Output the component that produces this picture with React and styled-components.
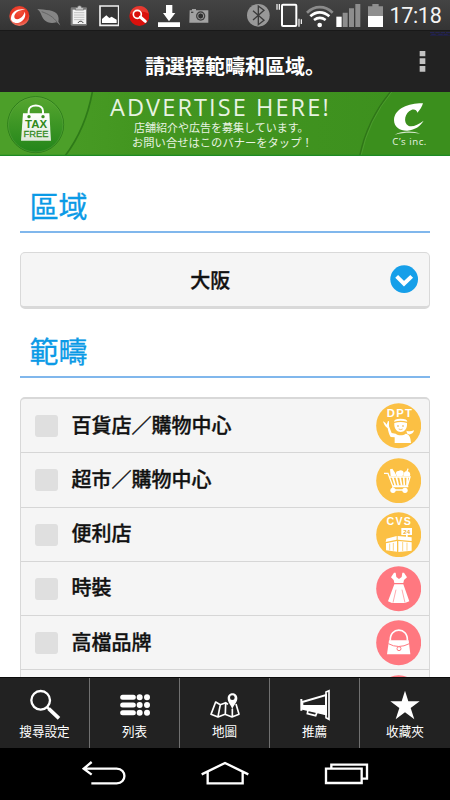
import React from 'react';
import styled, { createGlobalStyle } from 'styled-components';

const GlobalStyle = createGlobalStyle`
  * {
    box-sizing: border-box;
  }

  body {
    margin: 0;
    background: #fff;
    font-family: "Noto Sans CJK JP", "Noto Sans CJK TC", sans-serif;
  }
`;

const Screen = styled.div`
  display: flex;
  flex-direction: column;
  width: 450px;
  height: 800px;
  overflow: hidden;
  background: #fff;
`;

// Drawings are in thirds of a pixel, so the box is three times the drawn size.
const Svg = styled.svg.attrs(({ $box }) => ({
  viewBox: $box.join(' '),
  width: $box[2] / 3,
  height: $box[3] / 3,
  'aria-hidden': true,
}))`
  display: block;
  flex: none;
  margin-left: ${({ $before }) => $before || 0}px;
`;

const StatusBar = styled.header`
  display: flex;
  flex: none;
  height: 31px;
  background: linear-gradient(#444, #343434);
  border-bottom: 1px solid #191919;
`;

const Clock = styled.time`
  margin-left: 6.5px;
  color: #f4f4f4;
  font: 400 21.5px/32px Roboto, sans-serif;
  letter-spacing: -0.3px;
`;

const TitleBar = styled.div`
  display: grid;
  grid-template-columns: 145px 1fr 36px;
  flex: none;
  height: 61px;
  background: #222;
`;

const Title = styled.h1`
  grid-column: 2;
  margin: 0;
  color: #fff;
  font-size: 20px;
  font-weight: 700;
  line-height: 69px;
  white-space: nowrap;
`;

const Banner = styled.a`
  position: relative;
  display: grid;
  grid-template-columns: 110px 1fr 92px;
  flex: none;
  height: 64px;
  overflow: hidden;
  background: #41921f;
`;

const BannerArt = styled(Svg)`
  position: absolute;
  top: 0;
  left: 0;
`;

const BannerText = styled.div`
  position: relative;
  grid-column: 2;
  color: #e8f3e2;
  white-space: nowrap;
`;

const BannerTitle = styled.div`
  height: 28px;
  padding-top: 3px;
  font: 400 23.5px/25px "Open Sans", sans-serif;
  letter-spacing: 2.1px;
`;

const BannerLine = styled.div`
  padding-left: ${({ $indent }) => $indent}px;
  font-size: ${({ $size }) => $size}px;
  line-height: 15px;
`;

const Content = styled.main`
  flex: none;
  height: 521px;
  padding: 0 20px;
  overflow: hidden;
`;

const Heading = styled.h2`
  height: ${({ $height }) => $height}px;
  margin: 0 0 19px;
  padding: ${({ $height }) => $height - 49}px 0 0 9.5px;
  border-bottom: 2px solid #80b7ec;
  color: #0b9ae6;
  font-size: 29px;
  font-weight: 400;
  line-height: 42px;
  -webkit-text-stroke: 0.3px #0b9ae6;
`;

const Select = styled.button`
  display: flex;
  align-items: center;
  width: 100%;
  height: 57px;
  padding: 0 11px 0 0;
  border: 1px solid #d9d9d9;
  border-bottom-width: 3px;
  border-radius: 5px;
  background: #f5f5f5;
  color: #111;
  font: inherit;
`;

const SelectValue = styled.span`
  flex: 1;
  padding-left: 10px;
  font-size: 20px;
  font-weight: 500;
  -webkit-text-stroke: 0.35px #111;
`;

const List = styled.ul`
  margin: 0;
  padding: 0;
  border: 1px solid #d8d8d8;
  border-top-width: 2px;
  border-radius: 5px;
  background: #f5f5f5;
  list-style: none;
`;

const Row = styled.li`
  display: flex;
  align-items: center;
  height: 54.25px;
  padding: 1px 8px 0 14px;
  border-bottom: 1px solid #d6d6d6;
`;

const Checkbox = styled.span`
  width: 23px;
  height: 22px;
  border-radius: 3px;
  background: #dfdfdf;
`;

const RowLabel = styled.span`
  flex: 1;
  padding: 0 0 3px 13.5px;
  color: #111;
  font-size: 20px;
  font-weight: 500;
  line-height: 30px;
  -webkit-text-stroke: 0.35px #111;
`;

const TabBar = styled.nav`
  display: grid;
  grid-template-columns: repeat(5, 1fr);
  flex: none;
  height: 71px;
  border-top: 1px solid #0c0c0c;
  background: #222;
`;

const Tab = styled.a`
  display: flex;
  flex-direction: column;
  align-items: center;
  padding-top: 8px;
  border-right: 1px solid #707070;
  color: #fff;

  &:last-child {
    border-right: 0;
  }
`;

const TabLabel = styled.span`
  margin-top: -1px;
  font-size: 12.6px;
  line-height: 19px;
  white-space: nowrap;
`;

const SystemNav = styled.footer`
  display: flex;
  flex: none;
  height: 52px;
  background: #000;
`;

const StatusIcons = () => (
  <>
    <Svg $box={[26, 0, 63, 90]} $before={8.7}>
      <defs>
        <radialGradient id="ball" cx="50%" cy="30%" r="75%">
          <stop offset="0" stopColor="#f4523c" />
          <stop offset="0.6" stopColor="#e5301f" />
          <stop offset="1" stopColor="#ef8a78" />
        </radialGradient>
      </defs>
      <circle cx="57" cy="48" r="30" fill="url(#ball)" />
      <path d="M32 53c2-18 20-28 43-24-18 0-32 8-33 20-1 9 9 12 17 6 8-5 13-13 14-20 6 13-3 29-17 33-14 3-26-4-24-15z" fill="#fff" />
    </Svg>
    <Svg $box={[110, 0, 72, 90]} $before={7}>
      <path d="M111 27c22 3 54 2 61 18 4 8 3 15 2 20 3 4 5 8 6 12-4-5-8-8-12-10-11 3-27 3-36-7-9-9-8-22-21-33z" fill="#858585" />
      <path d="M124 35c20 7 36 16 47 33" fill="none" stroke="#555" strokeWidth="2" />
    </Svg>
    <Svg $box={[209, 0, 54, 90]} $before={9}>
      <rect x="211" y="22" width="49" height="55" rx="4" fill="#7b7b7b" />
      <path d="M217 29h40v43h-40z" fill="#f2f2f2" />
      <path d="M225 30v-7h6c0-8 13-8 13 0h6v7z" fill="#c8c8c8" stroke="#666" strokeWidth="2" />
      <path d="M221 38h31M221 45h31M221 52h31M221 59h31" stroke="#aaa" strokeWidth="2" />
      <path d="M233 69c3-7 14-7 15 0" fill="none" stroke="#333" strokeWidth="3" />
    </Svg>
    <Svg $box={[296, 0, 62, 90]} $before={11}>
      <path d="M299 18h56v58h-56z" fill="#343434" stroke="#eee" strokeWidth="5" />
      <path d="M305 69V57l13-11 9 8 7-4 15 9v10z" fill="#fff" />
    </Svg>
    <Svg $box={[386, 0, 62, 90]} $before={9.3}>
      <circle cx="417" cy="48" r="30" fill="#d9100c" />
      <path d="M389 43c4-32 52-34 56-2-17-9-38-8-56 2z" fill="#f3594c" opacity=".55" />
      <circle cx="411" cy="43" r="12" fill="none" stroke="#fff" strokeWidth="5" />
      <path d="M420 51l15 13" stroke="#fff" strokeWidth="9" strokeLinecap="round" />
    </Svg>
    <Svg $box={[474, 0, 67, 90]} $before={8.7}>
      <path d="M498 15h19v24h9l-19 25-18-25h9zM474 67h66v14h-66z" fill="#fff" />
    </Svg>
    <Svg $box={[567, 0, 60, 90]} $before={8.7}>
      <path d="M569 31h7v-4h12v4h37v37h-57z" fill="#a2a2a2" />
      <circle cx="602" cy="48" r="14" fill="#404040" />
      <circle cx="602" cy="48" r="9" fill="#303030" stroke="#aaa" strokeWidth="2.5" />
      <path d="M573 37h7" stroke="#444" strokeWidth="4" />
    </Svg>
    <Svg $box={[66, 0, 68, 90]} $before={38}>
      <circle cx="100" cy="46" r="34" fill="#989898" />
      <path d="M84 32l33 29-17 13V18l17 13-33 29" fill="none" stroke="#3b3b3b" strokeWidth="4" />
    </Svg>
    <Svg $box={[152, 0, 80, 90]} $before={6.3}>
      <rect x="170" y="14" width="43" height="64" rx="3" fill="none" stroke="#fff" strokeWidth="6" />
      <path d="M155 12v17M162 12v17M221 56v24M228 58v14" stroke="#fff" strokeWidth="3.5" />
    </Svg>
    <Svg $box={[240, 0, 84, 90]} $before={3}>
      <path d="M243 38c23-22 54-22 77 0" fill="none" stroke="#8b8b8b" strokeWidth="8" />
      <path d="M253 49c17-16 39-16 57 0M264 60c12-9 23-9 35 0" fill="none" stroke="#fff" strokeWidth="8" />
      <circle cx="281" cy="75" r="7" fill="#fff" />
    </Svg>
    <Svg $box={[332, 0, 74, 90]} $before={2.7}>
      <path d="M333 50h16v31h-16z" fill="#fff" />
      <path d="M352 38h15v43h-15zM371 25h15v56h-15zM390 12h15v69h-15z" fill="#8d8d8d" />
    </Svg>
    <Svg $box={[426, 0, 46, 90]} $before={6.6}>
      <path d="M426 19h13v-7h19v7h13v29h-45z" fill="#8f8f8f" />
      <path d="M426 48h45v33h-45z" fill="#fff" />
    </Svg>
  </>
);

const BannerBackground = () => (
  <BannerArt $box={[0, 0, 1350, 192]}>
    <defs>
      <linearGradient id="shine" x2="1" y2="0">
        <stop offset="0" stopColor="#4c9f29" />
        <stop offset="0.3" stopColor="#439620" />
        <stop offset="1" stopColor="#3c8f1e" />
      </linearGradient>
      <linearGradient id="disc" x2="0" y2="1">
        <stop offset="0" stopColor="#56a62f" />
        <stop offset="1" stopColor="#23851a" />
      </linearGradient>
      <linearGradient id="bag" x2="0" y2="1">
        <stop offset="0" stopColor="#fff" />
        <stop offset="1" stopColor="#dfe9da" />
      </linearGradient>
    </defs>
    <path d="M0 0h1350v192H0z" fill="url(#shine)" />
    <path d="M0 0h277q-20 110-82 192H0z" fill="#4c9f29" />
    <path d="M277 0q-20 110-82 192" fill="none" stroke="#2e7a18" strokeWidth="5" />
    <path d="M1171 0q-70 85-92 192h271V0z" fill="#3b8f1d" />
    <path d="M1171 0q-70 85-92 192" fill="none" stroke="#2f7518" strokeWidth="4" />
    <path d="M1175 0q-70 85-92 192" fill="none" stroke="#54a236" strokeWidth="2" />
    <circle cx="107" cy="98" r="84" fill="url(#disc)" stroke="#2b7c18" strokeWidth="3" />
    <circle cx="107" cy="98" r="82" fill="none" stroke="#71b453" strokeWidth="1" />
    <path d="M86 74V57c0-22 43-22 43 0v17" fill="none" stroke="#fff" strokeWidth="6" />
    <path d="M69 64h79l5 82H63z" fill="url(#bag)" />
    <circle cx="87" cy="74" r="5" fill="#398d20" />
    <circle cx="129" cy="74" r="5" fill="#398d20" />
    <g fill="#31891c" fontFamily="Liberation Sans, sans-serif" textAnchor="middle">
      <text x="108" y="108" fontSize="31" fontWeight="700" textLength="66" lengthAdjust="spacingAndGlyphs">TAX</text>
      <text x="108" y="135" fontSize="29" textLength="75" lengthAdjust="spacingAndGlyphs" stroke="#31891c" strokeWidth="0.8">FREE</text>
    </g>
    <path d="M1269 34C1230 33 1183 48 1182 84C1182 106 1202 117 1222 116C1246 114 1262 101 1271 86C1254 99 1236 106 1225 101C1208 93 1215 60 1234 54C1242 51 1250 53 1252 62C1260 54 1266 44 1269 34z" fill="#fff" />
    <path d="M1184 128c20-12 57-12 76-3-25-4-50-3-76 3z" fill="#d9ead1" />
    <text x="1228" y="158" fill="#e9f4e4" fontFamily="Open Sans, sans-serif" fontSize="29" textAnchor="middle" textLength="102">C’s inc.</text>
    <path d="M0 190h1350" stroke="#1d8a24" strokeWidth="4" />
  </BannerArt>
);

const DepartmentStore = () => (
  <Svg $box={[78, 40, 136, 136]}>
    <circle cx="146" cy="108" r="67.5" fill="#fbc044" />
    <g fill="#fff">
      <text x="148" y="81" fontFamily="Liberation Sans, sans-serif" fontSize="34" fontWeight="700" textAnchor="middle" textLength="75">DPT</text>
      <path d="M132 96q0-9 20-9t20 9q-20-6-40 0z" />
      <path d="M133 100q19-6 38 0c3 36-41 36-38 0z" />
      <path d="M99 95l7 4 4 6 4-11 3 1 0 15 8 20 12 2c8 6 22 6 30 0 10 1 15 9 16 28h-49v-17l-12-1c-5-6-7-18-9-26-8-5-12-14-14-21z" />
      <path d="M169 123q11 4 23-1c-1 11-17 17-21 8z" />
    </g>
    <g fill="#e9a934">
      <circle cx="144" cy="109" r="2.5" />
      <circle cx="159" cy="109" r="2.5" />
    </g>
    <path d="M146 118q6 4 12 0" fill="none" stroke="#e9a934" strokeWidth="2" />
  </Svg>
);

const Supermarket = () => (
  <Svg $box={[78, 202, 136, 136]}>
    <circle cx="146" cy="270" r="67.5" fill="#fbc044" />
    <path d="M102 248h12l15 40h46M119 259h61l-8 27h-44M129 288l-2 10h41" fill="none" stroke="#fff" strokeWidth="4" />
    <path d="M128 259l8 26M139 259l6 26M150 259l5 26M161 259l2 26M172 259l-1 26" stroke="#fff" strokeWidth="5" />
    <g fill="#fff">
      <path d="M120 236l7-2 7 11 6 11h-18z" />
      <path d="M138 250q-1-10 8-9 6-5 13 0 4 4 1 12l-4 4h-15z" />
      <path d="M160 256c0-9 4-14 9-14l4-9 3 2-3 7c7 2 9 8 7 14z" />
      <circle cx="129" cy="299" r="8" />
      <circle cx="165" cy="299" r="8" />
    </g>
  </Svg>
);

const ConvenienceStore = () => (
  <Svg $box={[78, 363, 136, 136]}>
    <circle cx="146" cy="431" r="67.5" fill="#fbc044" />
    <g fill="#fff">
      <text x="146" y="403" fontFamily="Liberation Sans, sans-serif" fontSize="32" fontWeight="700" textAnchor="middle" textLength="73">CVS</text>
      <path d="M154 411h32v21h-13v6h-5v-6h-14z" />
      <path d="M109 443l31-8v11l-33 7zM143 435l42 4v11l-42-4zM108 457l33-7v32l-33-4zM145 450l40 4v25l-40 4z" />
    </g>
    <text x="170" y="428" fill="#eead34" fontFamily="Liberation Sans, sans-serif" fontSize="18" fontWeight="700" textAnchor="middle">24</text>
    <path d="M119 458v20M130 456v23M158 453v27M171 455v24" stroke="#fbc044" strokeWidth="2" />
  </Svg>
);

const Fashion = () => (
  <Svg $box={[78, 108, 136, 136]}>
    <circle cx="146" cy="176" r="67.5" fill="#ff7880" />
    <path d="M132 128h5l2 13 8 6 8-6 2-13h5l9 14-9 8-2 9h-27l-2-9-8-8zM133 163h27l18 51-13 5h-39l-12-5z" fill="#fff" />
    <path d="M138 179l-9 39M156 179l9 39" stroke="#ff9aa0" strokeWidth="2.5" />
  </Svg>
);

const Luxury = () => (
  <Svg $box={[78, 269, 136, 136]}>
    <circle cx="146" cy="337" r="67.5" fill="#ff7880" />
    <path d="M121 331c-3-42 54-42 51 0" fill="none" stroke="#fff" strokeWidth="5" />
    <path d="M117 330h59l5 42h-70z" fill="#fff" />
    <path d="M115 340q31 17 63 0" fill="none" stroke="#ff7880" strokeWidth="3" />
    <circle cx="147" cy="355" r="6" fill="#fff" stroke="#ff7880" strokeWidth="3" />
  </Svg>
);

const NextCategory = () => (
  <Svg $box={[78, 435, 136, 136]}>
    <circle cx="146" cy="503" r="67.5" fill="#ff7880" />
  </Svg>
);

const categories = [
  { label: '百貨店／購物中心', Icon: DepartmentStore },
  { label: '超市／購物中心', Icon: Supermarket },
  { label: '便利店', Icon: ConvenienceStore },
  { label: '時裝', Icon: Fashion },
  { label: '高檔品牌', Icon: Luxury },
  { label: '', Icon: NextCategory },
];

const tabs = [
  {
    label: '搜尋設定',
    icon: (
      <Svg $box={[0, 36, 267, 108]}>
        <circle cx="122" cy="79" r="28" fill="none" stroke="#fff" strokeWidth="7" />
        <path d="M141 99l7 7" stroke="#fff" strokeWidth="7" />
        <path d="M146 104l31 29" stroke="#fff" strokeWidth="11" />
      </Svg>
    ),
  },
  {
    label: '列表',
    icon: (
      <Svg $box={[270, 36, 267, 108]}>
        <path d="M368 70h32M368 93h32M368 116h32" stroke="#fff" strokeWidth="15" strokeLinecap="round" />
        <path d="M419 70h0M419 93h0M419 116h0M441 70h0M441 93h0M441 116h0" stroke="#fff" strokeWidth="18" strokeLinecap="round" />
      </Svg>
    ),
  },
  {
    label: '地圖',
    icon: (
      <Svg $box={[540, 36, 267, 108]}>
        <path d="M684 91l-7-5-16 6-14-8-14 37 21 8 21-8 21 8 21-8-9-31M661 92l-7 36M677 87l-1 33M697 104v23" fill="none" stroke="#fff" strokeWidth="5" strokeLinejoin="round" />
        <path d="M697 106c-5-14-14-21-14-33 0-20 29-20 29 0 0 12-10 19-15 33z" fill="#fff" />
        <circle cx="697" cy="71" r="7" fill="#222" />
      </Svg>
    ),
  },
  {
    label: '推薦',
    icon: (
      <Svg $box={[135, 36, 267, 108]}>
        <path d="M229 75v35M232 84l71-21v58l-71-17z" fill="none" stroke="#fff" strokeWidth="6" />
        <path d="M230 93h72v29l-72-18z" fill="#fff" />
        <path d="M303 54l9-4v86l-9-5z" fill="none" stroke="#fff" strokeWidth="5" />
        <path d="M249 108l-2 11 25 6 4-10" fill="none" stroke="#fff" strokeWidth="5" />
      </Svg>
    ),
  },
  {
    label: '收藏夾',
    icon: (
      <Svg $box={[405, 36, 270, 108]}>
        <path d="M540 50l10 32h34l-27 20 11 34-28-21-28 21 11-34-27-20h34z" fill="#fff" />
      </Svg>
    ),
  },
];

const App = () => (
  <>
    <GlobalStyle />
    <Screen>
      <StatusBar>
        <StatusIcons />
        <Clock>17:18</Clock>
      </StatusBar>
      <TitleBar>
        <Title>請選擇範疇和區域。</Title>
        <Svg $box={[567, 93, 108, 183]}>
          <path d="M615 98h60M619 103h14M640 103h28" stroke="#25255c" strokeWidth="3" strokeDasharray="13 3" />
          <path d="M615 106h60" stroke="#20205a" strokeWidth="2" />
          <path d="M584 153h17v16h-17zM584 175h17v17h-17zM584 198h17v17h-17z" fill="#c2c2c2" />
        </Svg>
      </TitleBar>
      <Banner>
        <BannerBackground />
        <BannerText>
          <BannerTitle>ADVERTISE HERE!</BannerTitle>
          <BannerLine $indent={24} $size={11}>店舗紹介や広告を募集しています。</BannerLine>
          <BannerLine $indent={22} $size={11.3}>お問い合せはこのバナーをタップ！</BannerLine>
        </BannerText>
      </Banner>
      <Content>
        <Heading $height={77}>區域</Heading>
        <Select>
          <SelectValue>大阪</SelectValue>
          <Svg $box={[494, 257, 85, 85]}>
            <circle cx="536.5" cy="299.5" r="41.5" fill="#169fe9" />
            <path d="M514 291l22 22 23-22" fill="none" stroke="#fff" strokeWidth="12" />
          </Svg>
        </Select>
        <Heading $height={69}>範疇</Heading>
        <List>
          {categories.map(({ label, Icon }) => (
            <Row key={label}>
              <Checkbox />
              <RowLabel>{label}</RowLabel>
              <Icon />
            </Row>
          ))}
        </List>
      </Content>
      <TabBar>
        {tabs.map(({ label, icon }) => (
          <Tab key={label}>
            {icon}
            <TabLabel>{label}</TabLabel>
          </Tab>
        ))}
      </TabBar>
      <SystemNav>
        <Svg $box={[0, 222, 1350, 156]}>
          <g fill="none" stroke="#fff" strokeWidth="7">
            <path d="M275 264l-24 20 24 18M252 284h98c31 0 31 44 0 44h-76" />
            <path d="M605 301l70-34 70 34M623 294v34h105v-34" />
            <path d="M978 284h107v43H978zM994 284v-12h107v42h-14" />
          </g>
        </Svg>
      </SystemNav>
    </Screen>
  </>
);

export default App;
